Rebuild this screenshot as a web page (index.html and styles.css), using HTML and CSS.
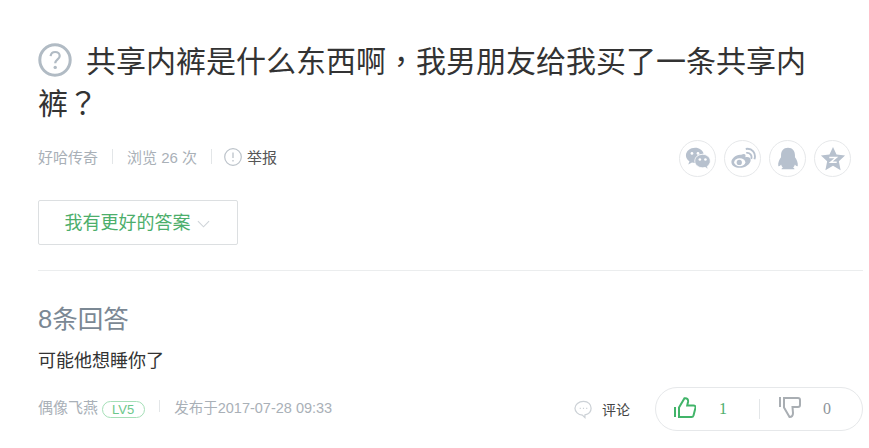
FILE: index.html
```html
<!DOCTYPE html>
<html lang="zh-CN">

<head>
  <meta charset="UTF-8" />
  <meta name="viewport" content="width=device-width, initial-scale=1.0" />
  <title>共享内裤是什么东西啊</title>
  <link rel="stylesheet" href="styles.css">
</head>

<body>
  <div class="wrap">
    <h1 class="title">
      <svg class="ask" viewBox="0 0 34 34">
        <circle cx="17" cy="17" r="15.2" fill="none" stroke="#b1bbc4" stroke-width="3" />
        <path d="M12.6 13.2c.3-2.8 2.2-4.2 4.6-4.2 2.6 0 4.5 1.600 4.500 3.900 0 3.400-4.400 3.500-4.500 7.400" fill="none" stroke="#b1bbc4" stroke-width="2.200" />
        <circle cx="17.200" cy="24.400" r="1.700" fill="#b1bbc4" />
      </svg>共享内裤是什么东西啊<span class="punct" lang="zh-TW">，</span>我男朋友给我买了一条共享内<br>裤<span class="punct" lang="zh-TW">？</span>
    </h1>

    <div class="meta">
      <div class="info">
        <span>好哈传奇</span>
        <i class="sep"></i>
        <span>浏览 26 次</span>
        <i class="sep"></i>
        <svg class="warn" viewBox="0 0 18 18">
          <circle cx="9" cy="9" r="8.300" fill="none" stroke="#bcc3ca" stroke-width="1.200" />
          <path d="M9 4.500v5.500M9 12v1.600" fill="none" stroke="#bcc3ca" stroke-width="1.300" />
        </svg>
        <span class="report">举报</span>
      </div>
      <div class="share">
        <a class="circle">
          <svg viewBox="0 0 28 28">
            <path d="M11 2C5.500 2 1 5.700 1 10.200c0 2.600 1.500 4.800 3.800 6.300L3.500 20l4-2.200c1 .3 2 .4 3 .4h.6c-.3-.8-.4-1.600-.4-2.400 0-4.200 3.900-7.500 8.700-7.500h.6C19.100 4.600 15.400 2 11 2z" fill="#b7c1ce" />
            <circle cx="7.500" cy="8" r="1.500" fill="#fff" />
            <circle cx="14" cy="8" r="1.500" fill="#fff" />
            <path d="M19 9c-4.800 0-8.500 3.200-8.500 7.200s3.700 7.200 8.500 7.200c.9 0 1.800-.1 2.600-.4l3.400 2-1-3.100c2-1.300 3.200-3.400 3.200-5.700 0-4-3.600-7.200-8.200-7.200z" fill="#b7c1ce" stroke="#fff" stroke-width=".8" />
            <circle cx="16" cy="14.500" r="1.400" fill="#fff" />
            <circle cx="22" cy="14.500" r="1.400" fill="#fff" />
          </svg>
        </a>
        <a class="circle">
          <svg viewBox="0 0 28 28">
            <path d="M12 9.500c3.500-2 5.600-.7 4.500 2.500 3.300-.9 5.800.5 5.800 3 0 4-5.400 8.500-11.800 8.500C5.500 23.500 1.500 21 1.500 17.200c0-3.400 5-8.500 10.500-7.700z" fill="#b7c1ce" />
            <ellipse cx="10.500" cy="17.500" rx="6" ry="4.300" fill="#fff" />
            <circle cx="10" cy="17.700" r="2.800" fill="#b7c1ce" />
            <path d="M17.500 7.500c3.800-.8 6.700 2.600 5.300 6.300M17 3.200c6.700-1.300 11.500 4.700 9.300 11" fill="none" stroke="#b7c1ce" stroke-width="2" />
          </svg>
        </a>
        <a class="circle">
          <svg viewBox="0 0 28 28">
            <path d="M14 2c-5 0-7.500 3.600-7.500 8v2c-1.800 2.500-3.500 5.800-3 9.200.5 1.200 2 .2 3-1.200.4 1.400 1.100 2.600 2 3.500-1 .3-1.500.8-1.500 1.500h14c0-.7-.5-1.200-1.500-1.500.9-.9 1.600-2.100 2-3.500 1 1.400 2.500 2.400 3 1.200.5-3.400-1.200-6.700-3-9.200v-2c0-4.400-2.500-8-7.500-8z" fill="#b7c1ce" />
          </svg>
        </a>
        <a class="circle">
          <svg viewBox="0 0 28 28">
            <path d="M14 1l3.800 8.200 9.200 1-6.700 6.100 1.900 9.700-8.200-4.800L5.800 26l1.900-9.700L1 10.200l9.200-1z" fill="#b7c1ce" />
            <path d="M10 12.500h7.500l-6 5h6.500" fill="none" stroke="#fff" stroke-width="1.600" />
          </svg>
        </a>
      </div>
    </div>

    <button class="better">我有更好的答案<svg class="down" viewBox="0 0 14 8">
        <path d="M1 1l6 6 6-6" fill="none" stroke="#cfd4d9" stroke-width="1.200" />
      </svg></button>

    <hr />

    <h2 class="count">8条回答</h2>
    <p class="answer">可能他想睡你了</p>

    <div class="foot">
      <div class="info">
        <span>偶像飞燕</span>
        <span class="lv">LV5</span>
        <i class="sep"></i>
        <span class="date">发布于2017-07-28 09:33</span>
      </div>
      <div class="actions">
        <svg class="bubble" viewBox="0 0 20 20">
          <path d="M10 1.500c-5 0-9 3.200-9 7.200 0 3.700 3.400 6.800 7.800 7.200l2.700 2.600v-2.800c3.800-.8 6.500-3.700 6.500-7 0-4-3-7.200-8-7.200z" fill="none" stroke="#ccd1d6" stroke-width="1.300" />
          <path d="M6 8.800h1.200M9.400 8.800h1.200M12.800 8.800H14" stroke="#ccd1d6" stroke-width="1.300" />
        </svg>
        <span class="comment">评论</span>
        <div class="vote">
          <svg class="thumb" viewBox="0 0 22 21">
            <path d="M1 10v10" fill="none" stroke="#41b469" stroke-width="2" />
            <path d="M5 20V10.500L10.500 1.200C13 .8 14.500 2.500 14 5l-.8 3.500h6.300c1.500 0 2.300 1 2 2.200l-2 7.800c-.3 1-1 1.500-2 1.500z" fill="none" stroke="#41b469" stroke-width="2" />
          </svg>
          <span class="up">1</span>
          <i class="sep"></i>
          <svg class="thumb" viewBox="0 0 22 21">
            <path d="M1 0v10" fill="none" stroke="#a9aeb3" stroke-width="2" />
            <path d="M5 1h14c1.200 0 2 .8 2 2v5c0 1.200-.8 2-2 2h-5.500l.5 6c0 2.500-1.500 4-3.500 4L5 10.500z" fill="none" stroke="#a9aeb3" stroke-width="2" />
          </svg>
          <span class="down-num">0</span>
        </div>
      </div>
    </div>
  </div>
</body>

</html>
```

FILE: styles.css
```css
body {
  margin: 0;
  padding: 0;
  background: #fff;
  font-family: "Liberation Sans", "Noto Sans CJK SC", sans-serif;
}

.wrap {
  padding: 41px 6px 0 38px;
}

.title {
  margin: 0;
  font-size: 30px;
  line-height: 42px;
  font-weight: 400;
  color: #333;
}

.punct {
  font-family: "Noto Sans CJK TC", sans-serif;
  line-height: 1;
}

.ask {
  width: 34px;
  height: 34px;
  margin-right: 14px;
  vertical-align: -5px;
}

.meta {
  display: flex;
  justify-content: space-between;
  align-items: center;
  margin-top: 15px;
  padding-right: 12px;
}

.meta .info {
  padding-bottom: 4px;
}

.info {
  display: flex;
  align-items: center;
  font-size: 15px;
  color: #a9b0b7;
}

.sep {
  width: 1px;
  height: 15px;
  margin: 0 14px;
  background: #e3e6e8;
}

.warn {
  width: 18px;
  height: 18px;
  margin: 0 5px 0 -2px;
}

.report {
  color: #555;
}

.share {
  display: flex;
  gap: 8px;
}

.circle {
  display: flex;
  align-items: center;
  justify-content: center;
  width: 35px;
  height: 35px;
  border: 1px solid #e6e8ea;
  border-radius: 50%;
}

.circle svg {
  width: 26px;
  height: 26px;
}

.better {
  display: block;
  width: 200px;
  height: 45px;
  margin-top: 23px;
  padding: 0 2px 4px 0;
  border: 1px solid #dcdfe1;
  border-radius: 2px;
  background: #fff;
  color: #4cae6b;
  font: inherit;
  font-size: 18px;
}

.down {
  width: 13px;
  height: 8px;
  margin-left: 6px;
  vertical-align: 1px;
}

hr {
  margin: 25px 0 0 0;
  border: none;
  border-top: 1px solid #ebedee;
}

.count {
  margin: 31px 0 0 0;
  font-size: 25.5px;
  line-height: 34px;
  font-weight: 400;
  color: #7b8894;
}

.answer {
  margin: 13px 0 0 0;
  font-size: 18px;
  line-height: 24px;
  color: #333;
}

.foot {
  display: flex;
  justify-content: space-between;
  align-items: center;
  margin-top: 14px;
}

.foot .info {
  padding-bottom: 6px;
}

.lv {
  margin: 6px 0 0 4px;
  padding: 0 10px 0 9px;
  height: 15px;
  border: 1px solid #a5dfb7;
  border-radius: 9px;
  color: #6cc78b;
  font-size: 13px;
  line-height: 15px;
}

.foot .info .sep {
  height: 12px;
}

.date {
  font-size: 14.5px;
}

.actions {
  display: flex;
  align-items: center;
}

.bubble {
  width: 19px;
  height: 19px;
  margin-right: 9px;
}

.comment {
  font-size: 14px;
  color: #444;
}

.vote {
  display: flex;
  align-items: center;
  width: 208px;
  height: 44px;
  margin-left: 25px;
  padding-left: 18px;
  box-sizing: border-box;
  border: 1px solid #e6e8ea;
  border-radius: 22px;
  font-family: "Liberation Serif", serif;
  font-size: 16px;
}

.vote .sep {
  height: 20px;
  margin: 0 19px 0 32px;
}

.thumb {
  width: 22px;
  height: 21px;
  margin-bottom: 3px;
}

.up {
  margin-left: 23px;
  color: #4cae6b;
}

.down-num {
  margin-left: 22px;
  color: #8e959b;
}
```
